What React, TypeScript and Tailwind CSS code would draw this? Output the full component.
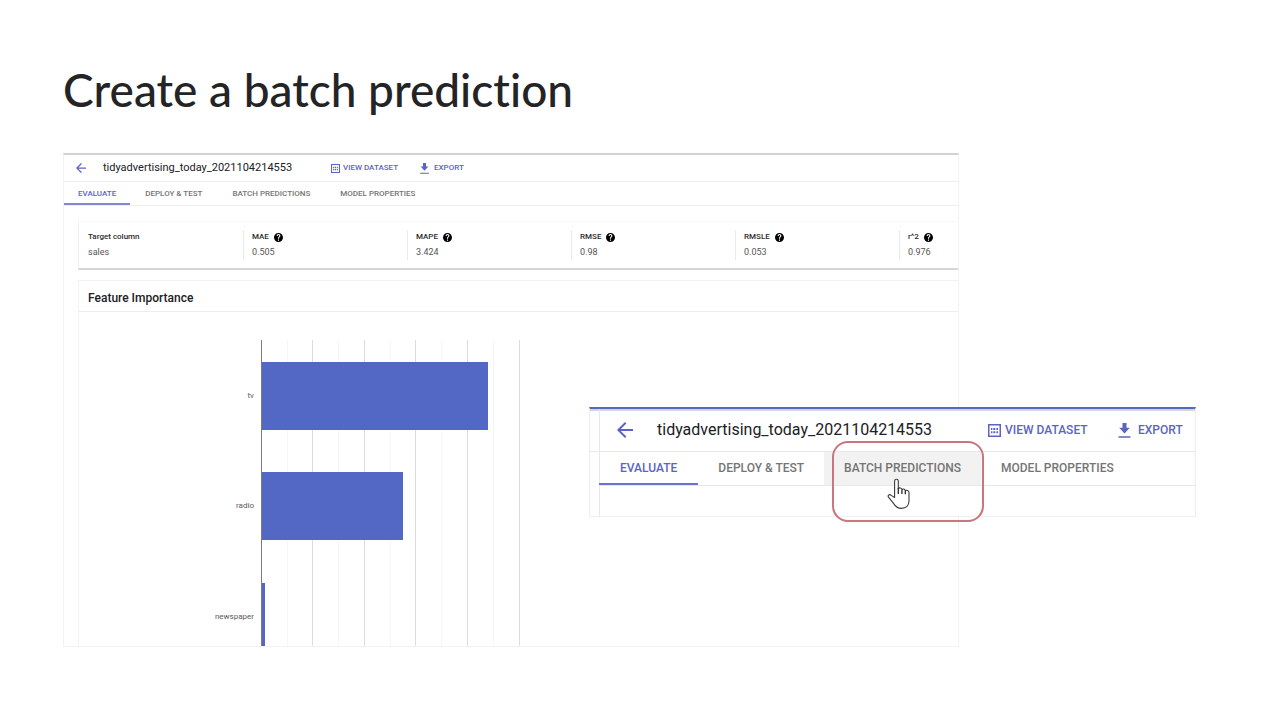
import React from "react";

type Size = "small" | "large";

const TABS = ["EVALUATE", "DEPLOY & TEST", "BATCH PREDICTIONS", "MODEL PROPERTIES"];

const METRICS = [
  { label: "Target column", value: "sales", help: false },
  { label: "MAE", value: "0.505", help: true },
  { label: "MAPE", value: "3.424", help: true },
  { label: "RMSE", value: "0.98", help: true },
  { label: "RMSLE", value: "0.053", help: true },
  { label: "r^2", value: "0.976", help: true },
];

const FEATURES = [
  { name: "tv", y: 50, width: 227 },
  { name: "radio", y: 160, width: 142 },
  { name: "newspaper", y: 271, width: 4 },
];

function BackIcon({ className }: { className: string }) {
  return (
    <svg viewBox="4 4 16 16" className={className} fill="currentColor" aria-hidden="true">
      <path d="M20 11H7.83l5.59-5.59L12 4l-8 8 8 8 1.41-1.41L7.83 13H20v-2z" />
    </svg>
  );
}

function DatasetIcon({ className }: { className: string }) {
  return (
    <svg viewBox="0 0 13 13" className={className} aria-hidden="true">
      <rect x="0.75" y="0.75" width="11.5" height="11.5" fill="none" stroke="currentColor" strokeWidth="1.5" />
      <path
        d="M3 4h1.400v2H3zM5.300 4h2v2h-2zM8.400 4h1.600v2H8.400zM3 7.200h1.400v2H3zM5.300 7.200h2v2h-2zM8.400 7.200h1.600v2H8.400z"
        fill="currentColor"
      />
    </svg>
  );
}

function ExportIcon({ className }: { className: string }) {
  return (
    <svg viewBox="0 0 12 15" className={className} fill="currentColor" aria-hidden="true">
      <path d="M4 0h4v4.8h3.3L6 10.4.7 4.8H4zM0 13.2h12v1.6H0z" />
    </svg>
  );
}

function HelpIcon() {
  return (
    <svg viewBox="2 2 20 20" className="size-[9px]" aria-label="Help" role="img">
      <path d="M12 2C6.48 2 2 6.48 2 12s4.48 10 10 10 10-4.48 10-10S17.52 2 12 2zm1.2 17h-2.4v-2.4h2.4V19zm2-8.3-.9.9c-.7.7-1.1 1.4-1.1 2.9h-2.4v-.6c0-1.1.5-2.1 1.2-2.8l1.2-1.3c.4-.3.6-.8.6-1.4 0-1-.8-1.8-1.8-1.8s-1.8.8-1.8 1.8H7.800c0-2.300 1.900-4.200 4.200-4.200s4.200 1.900 4.200 4.200c0 .9-.4 1.700-1 2.300z" />
    </svg>
  );
}

function ModelHeader({ size }: { size: Size }) {
  const large = size === "large";
  return (
    <header className={large ? "flex h-[42px] items-center pl-[17px]" : "flex h-[26px] items-center pl-3"}>
      <button type="button" aria-label="Back" className="shrink-0 text-[#5b64c4]">
        <BackIcon className={large ? "size-4" : "size-[10px]"} />
      </button>
      <h2
        className={
          large
            ? "w-[355px] shrink-0 pl-6 text-[16px] leading-5 text-[#202124]"
            : "w-[245px] shrink-0 pl-[17px] text-[11px] leading-4 text-[#202124]"
        }
      >
        tidyadvertising_today_2021104214553
      </h2>
      <button
        type="button"
        className={
          large
            ? "flex w-[130px] shrink-0 items-center gap-1 text-[12px] font-medium whitespace-nowrap text-[#5b64c4]"
            : "flex w-[89px] shrink-0 items-center gap-[3px] text-[8px] font-medium whitespace-nowrap text-[#5b64c4]"
        }
      >
        <DatasetIcon className={large ? "size-[13px]" : "size-[9px]"} />
        VIEW DATASET
      </button>
      <button
        type="button"
        className={
          large
            ? "flex items-center gap-[7px] text-[12px] font-medium text-[#5b64c4]"
            : "flex items-center gap-[5px] text-[8px] font-medium text-[#5b64c4]"
        }
      >
        <ExportIcon className={large ? "h-[15px] w-[13px]" : "h-[11px] w-[9px]"} />
        EXPORT
      </button>
    </header>
  );
}

function SmallTabs() {
  return (
    <nav className="flex h-[25px] border-y border-[#eeeeee]">
      {TABS.map((tab, i) => (
        <button
          key={tab}
          type="button"
          className={
            i === 0
              ? "border-b-2 border-[#8088d0] px-[14px] pt-0.5 text-[8px] font-medium text-[#5b64c4]"
              : "px-[15px] text-[8px] font-medium text-[#757575]"
          }
        >
          {tab}
        </button>
      ))}
    </nav>
  );
}

function LargeTabs() {
  return (
    <nav className="flex h-[34px] border-b border-[#e8e8e8]">
      {TABS.map((tab, i) => (
        <button
          key={tab}
          type="button"
          className={
            i === 0
              ? "border-b-2 border-[#6a73ca] px-[21px] text-[12px] font-medium text-[#5b64c4]"
              : i === 2
                ? "bg-[#f2f2f2] px-5 pb-0.5 text-[12px] font-medium text-[#757575]"
                : "px-5 pb-0.5 text-[12px] font-medium text-[#757575]"
          }
        >
          {tab}
        </button>
      ))}
    </nav>
  );
}

function Metrics() {
  return (
    <dl className="mt-4 ml-[14px] grid h-12 grid-cols-[repeat(5,164px)_1fr] items-center border-b-2 border-l border-b-[#d6d6d6] border-l-[#eeeeee] shadow-[0_-1px_0_#f8f8f8]">
      {METRICS.map((m, i) => (
        <div
          key={m.label}
          className={i === 0 ? "h-[30px] pl-[9px]" : "h-[30px] border-l border-[#eaeaea] pl-2"}
        >
          <dt className="flex h-[14px] items-center gap-[5px] text-[8px] font-medium whitespace-nowrap text-[#2b2b2b]">
            {m.label}
            {m.help && <HelpIcon />}
          </dt>
          <dd className="text-[9px] leading-4 text-[#555555]">{m.value}</dd>
        </div>
      ))}
    </dl>
  );
}

function ImportanceChart() {
  return (
    <svg width="480" height="334" viewBox="0 0 480 334" className="block" role="img" aria-label="Feature importance">
      {[1, 2, 3, 4, 5].map((n) => (
        <g key={n}>
          <rect x={Math.round(182 + n * 51.6 - 26)} y="28" width="1" height="306" fill="#f6f6f6" />
          <rect x={Math.round(181.5 + n * 51.6)} y="28" width="1" height="306" fill="#dcdcdc" />
        </g>
      ))}
      {FEATURES.map((f) => (
        <g key={f.name}>
          <rect x="182" y={f.y} width={f.width} height="68" fill="#5367c4" />
          <text x="175" y={f.y + 36} textAnchor="end" fontSize="8" fill="#5a5a5a">
            {f.name}
          </text>
        </g>
      ))}
      <rect x="182" y="28" width="1" height="306" fill="#7c7c7c" />
    </svg>
  );
}

function Pointer() {
  return (
    <svg viewBox="0 0 24 32" className="h-8 w-6" aria-hidden="true">
      <path
        d="M7.600 19.500V3.200c0-2.700 3.700-2.700 3.700 0v7.500c.9-1.300 3.300-.9 3.600.8 1-1 3.200-.5 3.400 1.200 1.300-.9 3.700-.2 3.700 1.800v8.300c0 5-2.800 7.600-7.600 7.600-4.300 0-5.900-1.700-7.900-5L1.500 19.200c-1.200-2.100 1-3.400 2.700-1.800z"
        fill="#fff"
        stroke="#3c3c3c"
        strokeWidth="1.100"
        strokeLinejoin="round"
      />
      <path d="M11.300 10v6M14.900 11.500v4.500M18.300 12.700v3.500" fill="none" stroke="#2b2b2b" strokeWidth="1.300" />
    </svg>
  );
}

export default function App() {
  return (
    <main className="min-h-screen bg-white pt-[62px] pl-[63px] font-['Roboto','Liberation_Sans',sans-serif]">
      <h1 className="font-['Lato','Open_Sans',sans-serif] text-[46px] leading-[56px] font-medium text-[#242426] [font-variant-ligatures:none]">
        Create a batch prediction
      </h1>
      <div className="relative mt-[35px]">
        <section className="w-[896px] max-w-full overflow-hidden border border-t-2 border-[#f2f2f2] border-t-[#d2d2d2]">
          <ModelHeader size="small" />
          <SmallTabs />
          <Metrics />
          <div className="mt-[10px] ml-[14px] border-t border-l border-[#f2f2f2]">
            <h3 className="h-[31px] border-b border-[#eeeeee] pl-[9px] text-[12px] leading-[35px] font-medium text-[#202124]">
              Feature Importance
            </h3>
            <ImportanceChart />
          </div>
        </section>
        <section className="absolute top-[254px] left-[526px] w-[607px] border border-t-2 border-[#f0f0f0] border-t-[#5367c4] bg-white pl-[9px] shadow-[inset_0_2px_1px_#d4d4d4]">
          <div className="border-l border-[#e8e8e8]">
            <ModelHeader size="large" />
            <div className="-ml-[10px] border-t border-[#e8e8e8] pl-[9px]">
              <LargeTabs />
            </div>
            <div className="h-[30px]" />
          </div>
          <div className="absolute top-8 left-[242px] h-[81px] w-[152px] rounded-2xl border-2 border-[#cb757e]" />
          <div className="absolute top-[69px] left-[297px]">
            <Pointer />
          </div>
        </section>
      </div>
    </main>
  );
}
